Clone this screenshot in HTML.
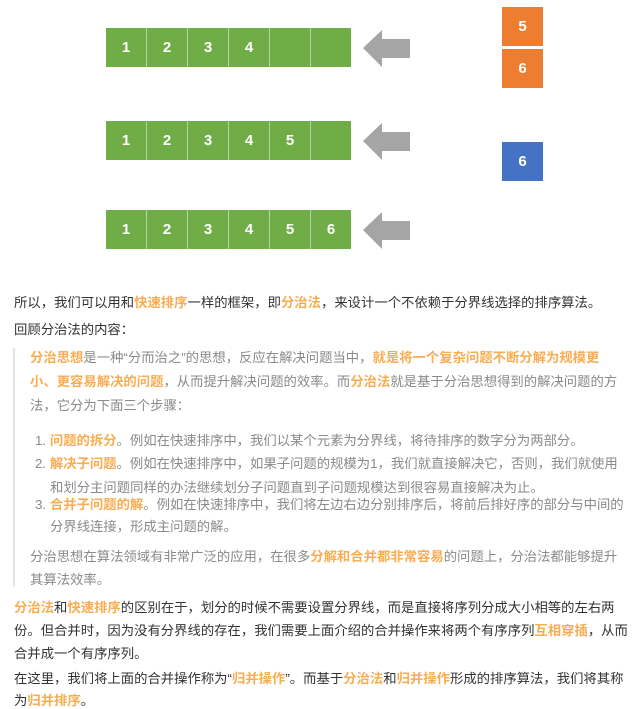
<!DOCTYPE html>
<html><head><meta charset="utf-8"><style>
body{margin:0;width:632px;height:709px;background:#fff;position:relative;overflow:hidden;font-family:"Liberation Sans","Noto Sans CJK SC",sans-serif;font-size:13.35px;color:#333}
.l{position:absolute;white-space:nowrap;line-height:16px}
.q{color:#8a8a8a}
b{color:#f9ad52;font-weight:bold}
.bar{position:absolute;left:106px;display:flex;height:39px}
.c{width:40px;height:39px;background:#70ad47;border-right:1px solid #b5d5a0;color:#fff;font:bold 15px "Liberation Sans",sans-serif;display:flex;align-items:center;justify-content:center}
.c:last-child{border-right:none}
.box{position:absolute;left:502px;width:41px;height:39px;color:#fff;font:bold 15px "Liberation Sans",sans-serif;display:flex;align-items:center;justify-content:center}
.arr{position:absolute;left:363px}
</style></head><body>
<div class="bar" style="top:28px"><div class="c">1</div><div class="c">2</div><div class="c">3</div><div class="c">4</div><div class="c"></div><div class="c"></div></div>
<div class="bar" style="top:121px"><div class="c">1</div><div class="c">2</div><div class="c">3</div><div class="c">4</div><div class="c">5</div><div class="c"></div></div>
<div class="bar" style="top:210px"><div class="c">1</div><div class="c">2</div><div class="c">3</div><div class="c">4</div><div class="c">5</div><div class="c">6</div></div>
<svg class="arr" style="top:30px" width="48" height="37"><polygon points="0,18 19,0 19,9 47,9 47,28 19,28 19,37" fill="#a5a5a5"/></svg>
<svg class="arr" style="top:123px" width="48" height="37"><polygon points="0,18 19,0 19,9 47,9 47,28 19,28 19,37" fill="#a5a5a5"/></svg>
<svg class="arr" style="top:212px" width="48" height="37"><polygon points="0,18 19,0 19,9 47,9 47,28 19,28 19,37" fill="#a5a5a5"/></svg>
<div class="box" style="top:7px;background:#ed7d31">5</div>
<div class="box" style="top:49px;background:#ed7d31">6</div>
<div class="box" style="top:142px;background:#4472c4">6</div>

<div class="l" style="left:14px;top:295px">所以，我们可以用和<b>快速排序</b>一样的框架，即<b>分治法</b>，来设计一个不依赖于分界线选择的排序算法。</div>
<div class="l" style="left:14px;top:322px">回顾分治法的内容：</div>
<div style="position:absolute;left:13px;top:348px;width:2px;height:239px;background:#e5e5e5"></div>
<div class="l q" style="left:30px;top:350px"><b>分治思想</b>是一种“分而治之”的思想，反应在解决问题当中，<b>就是将一个复杂问题不断分解为规模更</b></div>
<div class="l q" style="left:30px;top:374px"><b>小、更容易解决的问题</b>，从而提升解决问题的效率。而<b>分治法</b>就是基于分治思想得到的解决问题的方</div>
<div class="l q" style="left:30px;top:398px">法，它分为下面三个步骤：</div>
<div class="l q" style="left:35px;top:433px">1. <b>问题的拆分</b>。例如在快速排序中，我们以某个元素为分界线，将待排序的数字分为两部分。</div>
<div class="l q" style="left:35px;top:456px">2. <b>解决子问题</b>。例如在快速排序中，如果子问题的规模为1，我们就直接解决它，否则，我们就使用</div>
<div class="l q" style="left:50px;top:480px">和划分主问题同样的办法继续划分子问题直到子问题规模达到很容易直接解决为止。</div>
<div class="l q" style="left:35px;top:497px">3. <b>合并子问题的解</b>。例如在快速排序中，我们将左边右边分别排序后，将前后排好序的部分与中间的</div>
<div class="l q" style="left:50px;top:519px">分界线连接，形成主问题的解。</div>
<div class="l q" style="left:30px;top:549px">分治思想在算法领域有非常广泛的应用，在很多<b>分解和合并都非常容易</b>的问题上，分治法都能够提升</div>
<div class="l q" style="left:30px;top:572px">其算法效率。</div>
<div class="l" style="left:14px;top:600px"><b>分治法</b>和<b>快速排序</b>的区别在于，划分的时候不需要设置分界线，而是直接将序列分成大小相等的左右两</div>
<div class="l" style="left:14px;top:623px">份。但合并时，因为没有分界线的存在，我们需要上面介绍的合并操作来将两个有序序列<b>互相穿插</b>，从而</div>
<div class="l" style="left:14px;top:646px">合并成一个有序序列。</div>
<div class="l" style="left:14px;top:671px">在这里，我们将上面的合并操作称为“<b>归并操作</b>”。而基于<b>分治法</b>和<b>归并操作</b>形成的排序算法，我们将其称</div>
<div class="l" style="left:14px;top:693px">为<b>归并排序</b>。</div>
</body></html>
